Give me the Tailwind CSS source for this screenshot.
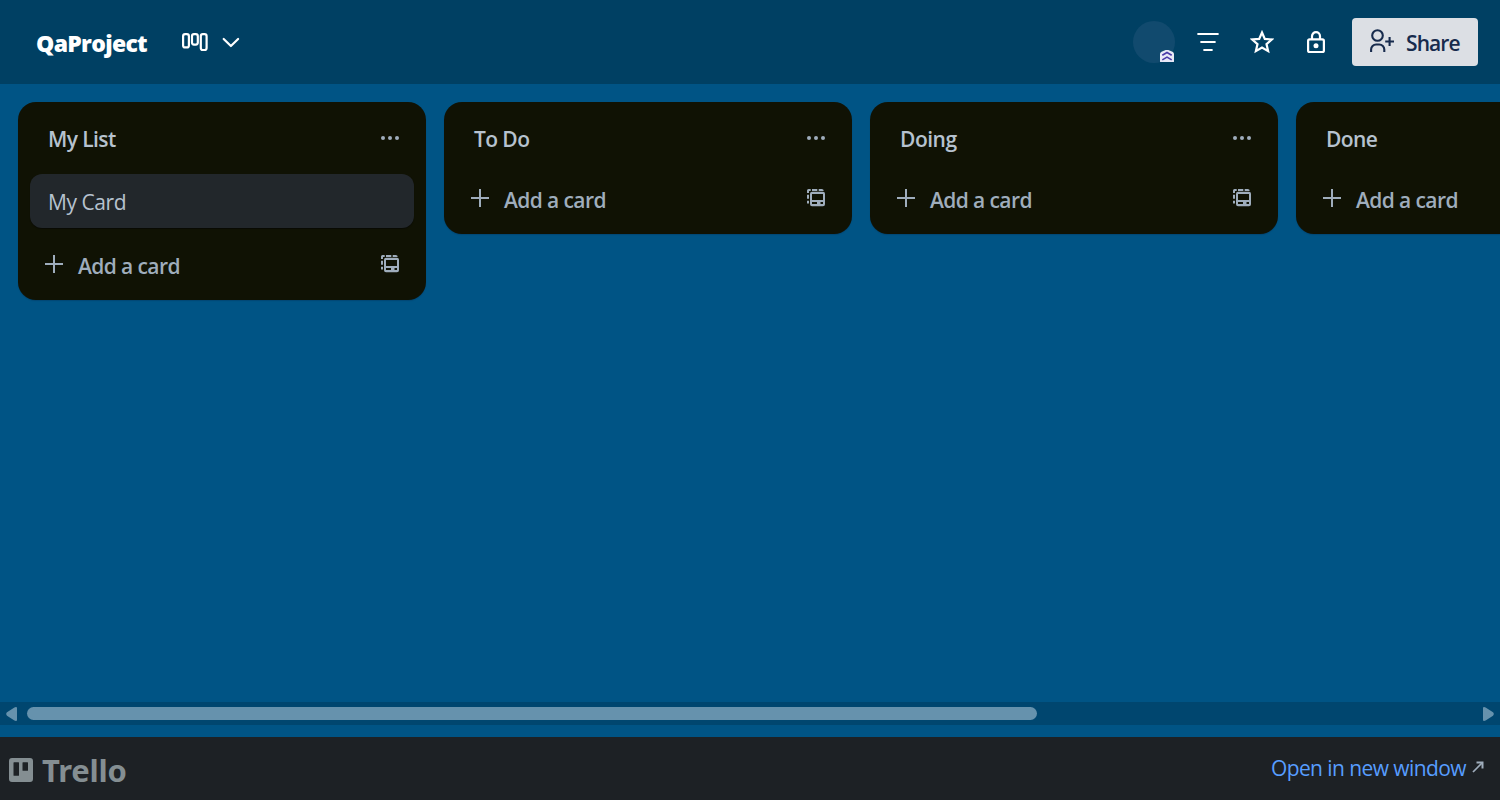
<!DOCTYPE html>
<html lang="en">
<head>
<meta charset="utf-8">
<title>QaProject | Trello</title>
<script src="https://cdn.jsdelivr.net/npm/@tailwindcss/browser@4"></script>
</head>
<body class="w-[1500px] h-[800px] overflow-hidden flex flex-col bg-[#005485] font-['Open_Sans','Noto_Sans',sans-serif] text-[21px] leading-[30px]">
<svg class="hidden">
  <symbol id="dots" viewBox="0 0 24 24"><g fill="currentColor"><circle cx="5" cy="12" r="2"/><circle cx="12" cy="12" r="2"/><circle cx="19" cy="12" r="2"/></g></symbol>
  <symbol id="plus" viewBox="0 0 24 24"><path d="M12 3v18M3 12h18" stroke="currentColor" stroke-width="2" fill="none"/></symbol>
  <symbol id="template" viewBox="0 0 24 24"><path d="M4 17.500v-2.800M4 12.700v-4M4 7V4.500Q4 4 4.500 4H6.700M8 4h5.300M14.700 4h3q1 0 1 .9" stroke="currentColor" stroke-width="2" fill="none"/><path fill="currentColor" fill-rule="evenodd" d="M8 5.800h11a2 2 0 0 1 2 2v10.400a2 2 0 0 1-2 2H8a2 2 0 0 1-2-2V7.800a2 2 0 0 1 2-2zM8 8v6h11V8zM8 16v2h5v-2zM16.500 16v2H19v-2z"/></symbol>
</svg>

<header class="h-[84px] shrink-0 bg-[#004063] flex items-center justify-between pl-9 pr-[22px] text-white">
  <div class="flex items-center">
    <h1 class="w-[143px] text-[23px] font-extrabold tracking-[-0.7px] whitespace-nowrap pt-px">QaProject</h1>
    <svg class="w-8 h-8 shrink-0" viewBox="0 0 32 32" fill="none" stroke="currentColor" stroke-width="2.200"><rect x="4.100" y="8.200" width="5.800" height="13.200" rx="2"/><rect x="13" y="8.200" width="5.800" height="10.400" rx="2"/><rect x="21.800" y="8.200" width="5.800" height="15.800" rx="2"/></svg>
    <svg class="w-6 h-6 ml-2" viewBox="0 0 24 24" fill="none" stroke="currentColor" stroke-width="2.200" stroke-linecap="round" stroke-linejoin="round"><path d="m4.700 9 7.200 7L19.100 9"/></svg>
  </div>
  <div class="flex items-center">
    <div class="relative w-[42px] h-[42px] rounded-full bg-[#114a6e] mr-[21px]">
      <svg class="absolute left-[27px] top-[29px] w-[14px] h-[13px]" viewBox="0 0 14 13"><path d="M0 11.500V4Q0 2.500 1.500 1.800L4.500 .4Q7-.7 9.500 .4l3 1.400Q14 2.500 14 4v7.500q0 .6-.7.6H.7q-.7 0-.7-.6z" fill="#e7e8f6"/><path d="m2.300 5.300 4.700-2.800 4.700 2.800M2.300 9.900l4.700-2.800 4.700 2.800" fill="none" stroke="#4839a8" stroke-width="1.600"/></svg>
    </div>
    <svg class="w-6 h-6 mr-[30px]" viewBox="0 0 24 24" fill="none" stroke="currentColor" stroke-width="2.200" stroke-linecap="round"><path d="M2.200 4h19.600M5.200 12h13.600M8.200 20h7.600"/></svg>
    <svg class="w-6 h-6 mr-[30px]" viewBox="0 0 24 24" fill="none" stroke="currentColor" stroke-width="2.200"><path d="m12 2.500 2.800 6.400 7 .6-5.300 4.600 1.600 7-6.100-3.600-6.100 3.600 1.600-7-5.300-4.600 7-.6z"/></svg>
    <svg class="w-6 h-6 mr-6" viewBox="0 0 24 24" fill="none" stroke="currentColor" stroke-width="2.200"><rect x="4.100" y="9.400" width="15.800" height="12.600" rx="1.500"/><path d="M8 9.500V6.200a4 4 0 0 1 8 0v3.300"/><circle cx="12" cy="15.700" r="2.500" fill="currentColor" stroke="none"/></svg>
    <div class="w-[126px] h-12 rounded-[4px] bg-[#dcdfe4] text-[#172b4d] flex items-center pl-[17px] font-semibold">
      <svg class="w-[26px] h-[30px] mr-[11px]" viewBox="0 0 26 30" fill="none" stroke="currentColor" stroke-width="2.100"><circle cx="8.500" cy="8.500" r="5.300"/><path d="M2.100 25v-2.500a5 5 0 0 1 5-5h3.200a5 5 0 0 1 5 5V25M16.200 14.500H25M20.600 10v9"/></svg>
      <span class="tracking-[-0.9px] pt-px">Share</span>
    </div>
  </div>
</header>

<main class="h-[618px] w-full overflow-hidden shrink-0 flex items-start gap-[18px] pt-[18px] pl-[18px] text-[#9fadbc] font-semibold">
  <section class="w-[408px] h-[198px] shrink-0 rounded-[18px] bg-[#101204] shadow-[0_1px_1px_#091e4240] px-3 pt-3">
    <div class="h-[60px] pl-[18px] pr-3 flex items-start justify-between">
      <h2 class="pt-[10px] text-[#b6c2cf] tracking-[-0.6px]">My List</h2><svg class="w-6 h-6 mt-3"><use href="#dots"/></svg>
    </div>
    <div class="h-[54px] rounded-xl bg-[#22272b] shadow-[0_1px_1px_#03040480] pl-[18px] pt-[13px] font-normal text-[#b6c2cf] tracking-[-0.45px]">My Card</div>
    <div class="pt-6 pl-3 pr-3 flex items-start"><svg class="w-6 h-6"><use href="#plus"/></svg><span class="grow ml-3 -mt-px tracking-[-0.6px]">Add a card</span><svg class="w-6 h-6"><use href="#template"/></svg></div>
  </section>
  <section class="w-[408px] h-[132px] shrink-0 rounded-[18px] bg-[#101204] shadow-[0_1px_1px_#091e4240] px-3 pt-3">
    <div class="h-[60px] pl-[18px] pr-3 flex items-start justify-between">
      <h2 class="pt-[10px] text-[#b6c2cf] tracking-[-0.6px]">To Do</h2><svg class="w-6 h-6 mt-3"><use href="#dots"/></svg>
    </div>
    <div class="pt-3 pl-3 pr-3 flex items-start"><svg class="w-6 h-6"><use href="#plus"/></svg><span class="grow ml-3 -mt-px tracking-[-0.6px]">Add a card</span><svg class="w-6 h-6"><use href="#template"/></svg></div>
  </section>
  <section class="w-[408px] h-[132px] shrink-0 rounded-[18px] bg-[#101204] shadow-[0_1px_1px_#091e4240] px-3 pt-3">
    <div class="h-[60px] pl-[18px] pr-3 flex items-start justify-between">
      <h2 class="pt-[10px] text-[#b6c2cf] tracking-[-0.5px]">Doing</h2><svg class="w-6 h-6 mt-3"><use href="#dots"/></svg>
    </div>
    <div class="pt-3 pl-3 pr-3 flex items-start"><svg class="w-6 h-6"><use href="#plus"/></svg><span class="grow ml-3 -mt-px tracking-[-0.6px]">Add a card</span><svg class="w-6 h-6"><use href="#template"/></svg></div>
  </section>
  <section class="w-[408px] h-[132px] shrink-0 rounded-[18px] bg-[#101204] shadow-[0_1px_1px_#091e4240] px-3 pt-3">
    <div class="h-[60px] pl-[18px] pr-3 flex items-start">
      <h2 class="pt-[10px] text-[#b6c2cf] tracking-[-0.6px]">Done</h2>
    </div>
    <div class="pt-3 pl-3 pr-3 flex items-start"><svg class="w-6 h-6"><use href="#plus"/></svg><span class="grow ml-3 -mt-px tracking-[-0.6px]">Add a card</span></div>
  </section>
</main>

<div class="h-[23px] shrink-0 bg-[#00466f] flex items-center justify-between pl-[6px] pr-[6px] text-[#6692ad]">
  <svg class="w-[11px] h-[14px]" viewBox="0 0 11 14"><path fill="currentColor" d="M11 1v12q0 1-1 1-1 0-2-.7L1 8.700Q-.6 7 1 5.300L8 .7Q9 0 10 0q1 0 1 1z"/></svg>
  <div class="w-[1010px] h-[13px] rounded-full bg-[#6692ad] ml-[10px] mr-auto"></div>
  <svg class="w-[11px] h-[14px]" viewBox="0 0 11 14"><path fill="currentColor" d="M0 1v12q0 1 1 1 1 0 2-.7l7-4.600Q11.600 7 10 5.300L3 .7Q2 0 1 0 0 0 0 1z"/></svg>
</div>

<footer class="mt-3 h-[63px] shrink-0 bg-[#1d2125] flex items-center justify-between pl-[9px] pr-4">
  <div class="flex items-center text-[#848e92]">
    <svg class="w-6 h-6 mt-[2px]" viewBox="0 0 24 24"><path fill="currentColor" fill-rule="evenodd" d="M3 0h18a3 3 0 0 1 3 3v18a3 3 0 0 1-3 3H3a3 3 0 0 1-3-3V3a3 3 0 0 1 3-3zM5 4.200q-.5 0-.5.500v12.600q0 .5.500.5h4.500q.5 0 .5-.5V4.700q0-.5-.5-.5zM14 4.200q-.5 0-.5.500v7.600q0 .5.500.5h4.500q.5 0 .5-.5V4.700q0-.5-.5-.5z"/></svg>
    <span class="ml-[9px] pt-[2px] text-[31px] font-bold tracking-[-0.2px] font-['Noto_Sans',sans-serif]">Trello</span>
  </div>
  <a class="flex items-center text-[#579dff]"><span class="tracking-[-0.58px] -mt-px">Open in new window</span>
    <svg class="w-3 h-3 ml-[6px] -mt-[3px] text-[#9fadbc]" viewBox="0 0 12 12" fill="none" stroke="currentColor" stroke-width="1.700"><path d="M1 11 10.500 1.500"/><path d="M4.500 1.500H10.500V7.500" stroke-width="2"/></svg>
  </a>
</footer>
</body>
</html>
